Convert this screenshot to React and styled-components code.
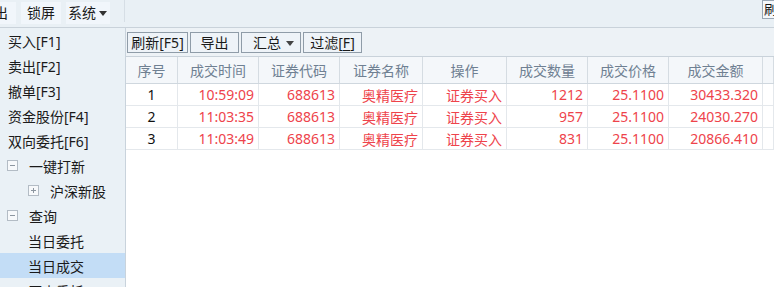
import React from 'react';
import styled, { createGlobalStyle } from 'styled-components';

const GlobalStyle = createGlobalStyle`
  html, body {
    margin: 0;
    padding: 0;
    background: #ffffff;
    overflow: hidden;
  }
  body {
    font-family: "Noto Sans", "Noto Sans CJK SC", sans-serif;
    font-size: 14px;
    color: #1a1a1a;
  }
`;

// --- Layout ---

const Window = styled.div`
  width: 774px;
  height: 287px;
  display: flex;
  flex-direction: column;
  overflow: hidden;
`;

const TopBar = styled.div`
  height: 27px;
  flex: none;
  display: flex;
  align-items: flex-start;
  justify-content: space-between;
  background: #e9f0f5;
  border-bottom: 1px solid #c9d2da;
  overflow: hidden;
`;

// the menu is scrolled a little to the left, so the first item is cut
const MenuGroup = styled.div`
  display: flex;
  align-items: flex-start;
  gap: 5px;
  margin-left: -20px;
  padding-top: 2px;
  width: 145px;
  height: 22px;
  box-sizing: border-box;
  border-right: 1px solid #d6dee5;
`;

const MenuItem = styled.div`
  height: 22px;
  line-height: 22px;
  padding: ${(p) => (p.$pad ? p.$pad : '0 6px')};
  background: #f1f6fb;
  display: flex;
  align-items: center;
  gap: 3px;
  white-space: nowrap;
`;

const Caret = styled.span`
  width: 0;
  height: 0;
  border-left: 4px solid transparent;
  border-right: 4px solid transparent;
  border-top: 5px solid ${(p) => p.$color || '#333'};
  margin-top: 1px;
`;

const CornerButton = styled.div`
  width: 40px;
  height: 19px;
  box-sizing: border-box;
  margin-right: -28px;
  border: 1px solid #9aa7b5;
  background: #f5f8fb;
  font-size: 13px;
  line-height: 17px;
  padding-left: 1px;
  white-space: nowrap;
  overflow: hidden;
`;

const Main = styled.div`
  flex: 1;
  display: flex;
  min-height: 0;
`;

// --- Sidebar ---

const Sidebar = styled.nav`
  width: 125px;
  flex: none;
  background: #eaf1f6;
  border-right: 1px solid #c9d3dc;
  display: flex;
  flex-direction: column;
  overflow: hidden;
`;

const NavRow = styled.div`
  height: 25px;
  flex: none;
  display: flex;
  align-items: center;
  gap: 11px;
  padding-left: ${(p) => p.$indent}px;
  background: ${(p) => (p.$active ? '#c3ddf6' : 'transparent')};
  white-space: nowrap;
`;

const TreeBox = styled.span`
  width: 9px;
  height: 9px;
  flex: none;
  border: 1px solid #b3bcc5;
  background: #f7f9fb;
  position: relative;

  &::before {
    content: '';
    position: absolute;
    left: 2px;
    right: 2px;
    top: 4px;
    height: 1px;
    background: #8c96a0;
  }

  &::after {
    content: '';
    display: ${(p) => (p.$open ? 'none' : 'block')};
    position: absolute;
    top: 2px;
    bottom: 2px;
    left: 4px;
    width: 1px;
    background: #8c96a0;
  }
`;

// --- Content ---

const Content = styled.section`
  flex: 1;
  display: flex;
  flex-direction: column;
  min-width: 0;
  background: #ffffff;
`;

const Toolbar = styled.div`
  height: 27px;
  flex: none;
  display: flex;
  align-items: center;
  gap: 2px;
  padding: 1px 0 0 1px;
  box-sizing: content-box;
  background: #edf2f6;
  border-bottom: 1px solid #c9d2da;
`;

const ToolButton = styled.div`
  width: ${(p) => p.$w}px;
  height: 21px;
  box-sizing: border-box;
  border: 1px solid #8f9ca8;
  background: #eef3f8;
  display: flex;
  align-items: center;
  justify-content: ${(p) => (p.$split ? 'space-between' : 'center')};
  padding: ${(p) => (p.$split ? '0 6px 0 11px' : '0')};
  line-height: 19px;
  white-space: nowrap;
`;

const Mnemonic = styled.span`
  text-decoration: underline;
  text-underline-offset: 2px;
`;

const Grid = styled.div`
  display: grid;
  grid-template-columns: 52px 81px 81px 83px 84px 81px 81px 94px 1fr;
`;

const HeaderRow = styled(Grid)`
  height: 26px;
  background: #f4f7fa;
  border-bottom: 1px solid #cfd7de;
`;

const HeaderCell = styled.div`
  border-right: 1px solid #d5dce2;
  display: flex;
  align-items: center;
  justify-content: center;
  color: #6f8092;
  white-space: nowrap;
  overflow: hidden;
`;

const DataRow = styled(Grid)`
  height: 21px;
  border-bottom: 1px solid #e4e8ec;
`;

const Cell = styled.div`
  border-right: 1px solid #e4e8ec;
  display: flex;
  align-items: center;
  justify-content: ${(p) => (p.$center ? 'center' : 'flex-end')};
  padding-right: ${(p) => (p.$center ? '0' : '4px')};
  color: ${(p) => (p.$center ? '#111' : '#ee434b')};
  white-space: nowrap;
  overflow: hidden;
`;

const columns = ['序号', '成交时间', '证券代码', '证券名称', '操作', '成交数量', '成交价格', '成交金额', ''];

const trades = [
  { no: 1, time: '10:59:09', code: '688613', name: '奥精医疗', op: '证券买入', qty: '1212', price: '25.1100', amount: '30433.320' },
  { no: 2, time: '11:03:35', code: '688613', name: '奥精医疗', op: '证券买入', qty: '957', price: '25.1100', amount: '24030.270' },
  { no: 3, time: '11:03:49', code: '688613', name: '奥精医疗', op: '证券买入', qty: '831', price: '25.1100', amount: '20866.410' },
];

const navItems = [
  { label: '买入[F1]', indent: 8 },
  { label: '卖出[F2]', indent: 8 },
  { label: '撤单[F3]', indent: 8 },
  { label: '资金股份[F4]', indent: 8 },
  { label: '双向委托[F6]', indent: 8 },
  { label: '一键打新', indent: 7, box: 'open' },
  { label: '沪深新股', indent: 28, box: 'closed' },
  { label: '查询', indent: 7, box: 'open' },
  { label: '当日委托', indent: 28 },
  { label: '当日成交', indent: 28, active: true },
  { label: '历史委托', indent: 28 },
];

const App = () => {
  return (
    <Window>
      <GlobalStyle />
      <TopBar>
        <MenuGroup>
          <MenuItem $pad="0 8px 0 0">退出</MenuItem>
          <MenuItem>锁屏</MenuItem>
          <MenuItem $pad="0 3px 0 2px">
            系统
            <Caret />
          </MenuItem>
        </MenuGroup>
        <CornerButton>刷新</CornerButton>
      </TopBar>

      <Main>
        <Sidebar>
          {navItems.map((item) => (
            <NavRow key={item.label} $indent={item.indent} $active={item.active}>
              {item.box && <TreeBox $open={item.box === 'open'} />}
              <span>{item.label}</span>
            </NavRow>
          ))}
        </Sidebar>

        <Content>
          <Toolbar>
            <ToolButton $w={61}>刷新[F5]</ToolButton>
            <ToolButton $w={49}>导出</ToolButton>
            <ToolButton $w={60} $split>
              汇总
              <Caret $color="#444" />
            </ToolButton>
            <ToolButton $w={59}>
              过滤[<Mnemonic>F</Mnemonic>]
            </ToolButton>
          </Toolbar>

          <HeaderRow>
            {columns.map((c, i) => (
              <HeaderCell key={i}>{c}</HeaderCell>
            ))}
          </HeaderRow>

          {trades.map((t) => (
            <DataRow key={t.no}>
              <Cell $center>{t.no}</Cell>
              <Cell>{t.time}</Cell>
              <Cell>{t.code}</Cell>
              <Cell>{t.name}</Cell>
              <Cell>{t.op}</Cell>
              <Cell>{t.qty}</Cell>
              <Cell>{t.price}</Cell>
              <Cell>{t.amount}</Cell>
              <Cell />
            </DataRow>
          ))}
        </Content>
      </Main>
    </Window>
  );
};

export default App;
